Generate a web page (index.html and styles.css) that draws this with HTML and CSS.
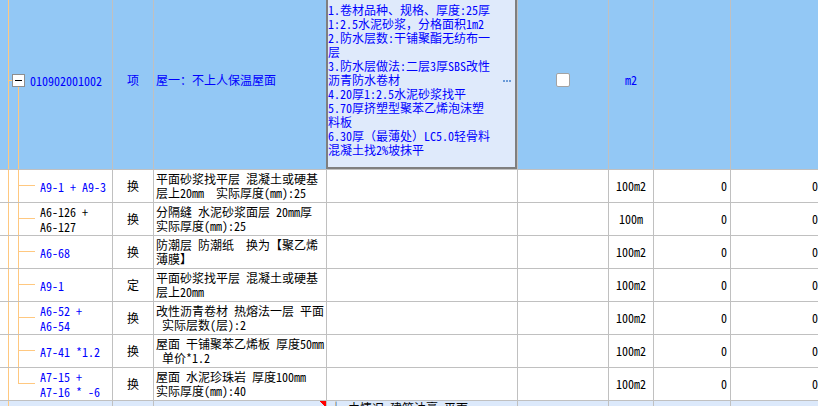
FILE: index.html
```html
<!DOCTYPE html>
<html lang="zh-CN">
<head>
<meta charset="utf-8">
<title>清单</title>
<link rel="stylesheet" href="styles.css">
</head>
<body>
<div class="sheet">
  <div class="row head">
    <div class="cell code code-head"><span class="toggle"></span><span class="blue">010902001002</span></div>
    <div class="cell type blue">项</div>
    <div class="cell desc blue">屋一<span class="fw">：</span>不上人保温屋面</div>
    <div class="cell feat">
      <div class="editor">
        <div class="lines">1.卷材品种、规格、厚度:25厚<br>1:2.5水泥砂浆<span class="fw">，</span>分格面积1m2<br>2.防水层数:干铺聚酯无纺布一<br>层<br>3.防水层做法:二层3厚SBS改性<br>沥青防水卷材<br>4.20厚1:2.5水泥砂浆找平<br>5.70厚挤塑型聚苯乙烯泡沫塑<br>料板<br>6.30厚<span class="fw">（</span>最薄处<span class="fw">）</span>LC5.0轻骨料<br>混凝土找2%坡抹平</div>
        <span class="more"><i></i><i></i><i></i></span>
      </div>
    </div>
    <div class="cell chk"><span class="box"></span></div>
    <div class="cell unit blue">m2</div>
    <div class="cell num"></div>
    <div class="cell num"></div>
  </div>

  <div class="row">
    <div class="cell code child blue">A9-1 + A9-3</div>
    <div class="cell type">换</div>
    <div class="cell desc">平面砂浆找平层 混凝土或硬基<br>层上20mm  实际厚度(mm):25</div>
    <div class="cell feat"></div>
    <div class="cell chk"></div>
    <div class="cell unit">100m2</div>
    <div class="cell num">0</div>
    <div class="cell num">0</div>
  </div>

  <div class="row">
    <div class="cell code child">A6-126 +<br>A6-127</div>
    <div class="cell type">换</div>
    <div class="cell desc">分隔缝 水泥砂浆面层 20mm厚<br>实际厚度(mm):25</div>
    <div class="cell feat"></div>
    <div class="cell chk"></div>
    <div class="cell unit">100m</div>
    <div class="cell num">0</div>
    <div class="cell num">0</div>
  </div>

  <div class="row">
    <div class="cell code child blue">A6-68</div>
    <div class="cell type">换</div>
    <div class="cell desc">防潮层 防潮纸  换为【聚乙烯<br>薄膜】</div>
    <div class="cell feat"></div>
    <div class="cell chk"></div>
    <div class="cell unit">100m2</div>
    <div class="cell num">0</div>
    <div class="cell num">0</div>
  </div>

  <div class="row">
    <div class="cell code child blue">A9-1</div>
    <div class="cell type">定</div>
    <div class="cell desc">平面砂浆找平层 混凝土或硬基<br>层上20mm</div>
    <div class="cell feat"></div>
    <div class="cell chk"></div>
    <div class="cell unit">100m2</div>
    <div class="cell num">0</div>
    <div class="cell num">0</div>
  </div>

  <div class="row">
    <div class="cell code child blue">A6-52 +<br>A6-54</div>
    <div class="cell type">换</div>
    <div class="cell desc">改性沥青卷材 热熔法一层 平面<br> 实际层数(层):2</div>
    <div class="cell feat"></div>
    <div class="cell chk"></div>
    <div class="cell unit">100m2</div>
    <div class="cell num">0</div>
    <div class="cell num">0</div>
  </div>

  <div class="row">
    <div class="cell code child blue">A7-41 *1.2</div>
    <div class="cell type">换</div>
    <div class="cell desc">屋面 干铺聚苯乙烯板 厚度50mm<br> 单价*1.2</div>
    <div class="cell feat"></div>
    <div class="cell chk"></div>
    <div class="cell unit">100m2</div>
    <div class="cell num">0</div>
    <div class="cell num">0</div>
  </div>

  <div class="row">
    <div class="cell code child last blue">A7-15 +<br>A7-16 * -6</div>
    <div class="cell type">换</div>
    <div class="cell desc">屋面 水泥珍珠岩 厚度100mm<br>实际厚度(mm):40</div>
    <div class="cell feat"></div>
    <div class="cell chk"></div>
    <div class="cell unit">100m2</div>
    <div class="cell num">0</div>
    <div class="cell num">0</div>
  </div>

  <div class="row next">
    <div class="cell code trunk"></div>
    <div class="cell type"></div>
    <div class="cell desc note"></div>
    <div class="cell feat peek">└ 由情况 建筑油膏 平面</div>
    <div class="cell chk"></div>
    <div class="cell unit"></div>
    <div class="cell num"></div>
    <div class="cell num"></div>
  </div>
</div>
</body>
</html>
```

FILE: styles.css
```css
html, body {
  margin: 0;
  padding: 0;
  background: #ffffff;
  overflow: hidden;
}

body {
  font-family: "Noto Sans CJK SC", sans-serif;
  font-size: 12px;
  font-feature-settings: "hwid" 1;
  color: #000000;
}

.fw {
  font-feature-settings: normal;
}

.sheet {
  width: 822px;
  margin-top: -9px;
}

.row {
  display: grid;
  grid-template-columns: 113px 41px 173px 191px 91px 45px 77px 91px;
  height: 33px;
  background: #ffffff;
}

.row.head {
  height: 179px;
  background: #93c8f5;
}

.row.next {
  background: #dce9fb;
}

.cell {
  box-sizing: border-box;
  border-right: 1px solid #c0c0c0;
  border-bottom: 1px solid #c0c0c0;
  display: flex;
  align-items: center;
  white-space: pre;
  line-height: 14px;
  min-width: 0;
}

.blue {
  color: #0000ff;
}

/* tree connectors drawn as background lines */
.code {
  padding-left: 40px;
  line-height: 15px;
  background-repeat: no-repeat;
}

.code.child {
  background-image:
    linear-gradient(#ffc880, #ffc880),
    linear-gradient(#ffc880, #ffc880),
    linear-gradient(#ffc880, #ffc880);
  background-position: 8px 0, 18px 0, 18px 15px;
  background-size: 1px 100%, 1px 100%, 17px 1px;
}

.code.child.last {
  background-size: 1px 100%, 1px 16px, 17px 1px;
}

.code.trunk {
  background-image: linear-gradient(#ffc880, #ffc880);
  background-position: 8px 0;
  background-size: 1px 100%;
}

.code.code-head {
  padding-left: 12px;
  background-image:
    linear-gradient(#ffc880, #ffc880),
    linear-gradient(#ffc880, #ffc880),
    linear-gradient(#ffc880, #ffc880);
  background-position: 8px 0, 9px 89px, 18px 96px;
  background-size: 1px 100%, 3px 1px, 1px 100%;
}

.toggle {
  box-sizing: border-box;
  width: 13px;
  height: 13px;
  margin-right: 5px;
  border: 1px solid #8e8e8e;
  background: linear-gradient(#000000, #000000) center / 7px 1px no-repeat, #ffffff;
  flex: none;
}

.type {
  justify-content: center;
}

.desc {
  padding-left: 2px;
}

.unit {
  justify-content: center;
}

.num {
  justify-content: flex-end;
  padding-right: 3px;
}

.chk {
  justify-content: center;
}

.box {
  box-sizing: border-box;
  width: 14px;
  height: 14px;
  border: 1px solid #a3a3a3;
  border-radius: 2px;
  background: #ffffff;
}

/* in-place editor over the feature cell */
.head .feat {
  align-items: stretch;
}

.editor {
  box-sizing: border-box;
  flex: 1;
  margin-left: -1px;
  border: 2px solid #7f7f7f;
  background: #dfeafb;
  color: #0000ff;
  display: flex;
  align-items: center;
  justify-content: space-between;
  padding-left: 0;
}

.lines {
  line-height: 14px;
}

.more {
  display: flex;
  gap: 1px;
  margin-right: 4px;
  margin-top: 1px;
}

.more i {
  display: block;
  width: 2px;
  height: 2px;
  background: #6a9bd8;
}

.note {
  background: linear-gradient(to bottom left, #ff0000 50%, transparent 50%) top right / 6px 6px no-repeat;
}

.peek {
  align-items: flex-start;
  padding-left: 3px;
  padding-top: 0;
  line-height: 14px;
}
```
